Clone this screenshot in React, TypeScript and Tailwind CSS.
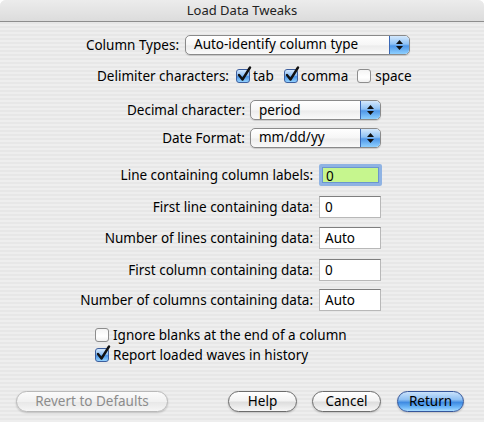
import React from "react"

const font = { fontFamily: '"Lucida Grande", "Noto Sans", sans-serif' }

function Stepper() {
  return (
    <div className="flex h-full w-[20px] flex-col items-center justify-center gap-[2px] rounded-r-[4px] border-l border-[#3a68b5] bg-[linear-gradient(180deg,#d4e8fc_0%,#8fc2f5_45%,#4f97e8_55%,#8ed0ff_100%)]">
      <svg width="7" height="4" viewBox="0 0 7 4">
        <path d="M3.5 0 L7 4 L0 4 Z" fill="#111" />
      </svg>
      <svg width="7" height="4" viewBox="0 0 7 4">
        <path d="M0 0 L7 0 L3.5 4 Z" fill="#111" />
      </svg>
    </div>
  )
}

function Popup({ value, width }: { value: string; width: string }) {
  return (
    <div
      className={`flex h-[20px] ${width} items-center overflow-hidden rounded-[5px] border border-[#8a8a8a] bg-[linear-gradient(180deg,#ffffff_0%,#f6f6f6_50%,#ececec_55%,#fafafa_100%)] shadow-[0_1px_1px_rgba(0,0,0,0.15)]`}
    >
      <span className="flex-1 pl-[8px] text-[13.5px] leading-none text-black">{value}</span>
      <Stepper />
    </div>
  )
}

function Checkbox({ checked }: { checked: boolean }) {
  return (
    <div className="relative h-[14px] w-[14px] shrink-0">
      <div
        className={`h-full w-full rounded-[3px] border ${
          checked
            ? "border-[#3d5f9e] bg-[linear-gradient(180deg,#d2e6fb_0%,#8ebff3_45%,#4a93e6_55%,#93d2ff_100%)]"
            : "border-[#8d8d8d] bg-[linear-gradient(180deg,#f4f4f4_0%,#ffffff_60%,#f0f0f0_100%)]"
        }`}
      />
      {checked && (
        <svg className="absolute left-[1px] top-[-3px]" width="15" height="16" viewBox="0 0 15 16">
          <path
            d="M2 9 L5.5 13.5 L13 1.5"
            fill="none"
            stroke="#111"
            strokeWidth="2.4"
            strokeLinecap="round"
            strokeLinejoin="round"
          />
        </svg>
      )}
    </div>
  )
}

function Field({ value, focused }: { value: string; focused?: boolean }) {
  if (focused) {
    return (
      <div className="flex h-[22px] w-[63px] rounded-[2px] border-[3px] border-[#8fb3e3] bg-[#c6f68e] shadow-[inset_0_0_0_1px_#6b95cf]">
        <span className="pl-[4px] pt-[1px] text-[13.5px] leading-[16px] text-black">{value}</span>
      </div>
    )
  }
  return (
    <div className="flex h-[22px] w-[62px] border border-[#b8b8b8] border-t-[#7f7f7f] bg-white">
      <span className="pl-[5px] pt-[2px] text-[13.5px] leading-[16px] text-black">{value}</span>
    </div>
  )
}

function FieldRow({ label, value, focused, mt }: { label: string; value: string; focused?: boolean; mt: string }) {
  return (
    <div className={`flex items-center ${mt}`}>
      <div className="w-[313px] text-right text-[13.5px] text-black">{label}</div>
      <div className="ml-[6px]">
        <Field value={value} focused={focused} />
      </div>
    </div>
  )
}

function Button({ label, width, kind }: { label: string; width: string; kind?: "default" | "disabled" }) {
  const styles =
    kind === "default"
      ? "border-[#34559a] bg-[linear-gradient(180deg,#c9e2fb_0%,#8fc0f3_40%,#3f8be2_55%,#6cb6f8_80%,#a9dcff_100%)] text-black"
      : kind === "disabled"
        ? "border-[#b9b9b9] bg-[linear-gradient(180deg,#fbfbfb_0%,#f1f1f1_50%,#e8e8e8_55%,#f6f6f6_100%)] text-[#8c8c8c]"
        : "border-[#6c6c6c] bg-[linear-gradient(180deg,#ffffff_0%,#f3f3f3_45%,#dedede_55%,#f7f7f7_100%)] text-black"
  return (
    <div
      className={`flex h-[21px] ${width} items-center justify-center rounded-full border text-[13.5px] leading-none shadow-[0_1px_2px_rgba(0,0,0,0.2)] ${styles}`}
    >
      {label}
    </div>
  )
}

export default function App() {
  return (
    <div className="h-[422px] w-[484px] bg-white" style={font}>
      <div className="flex h-[422px] w-[484px] flex-col overflow-hidden rounded-t-[6px] bg-[repeating-linear-gradient(180deg,#eeeeee_0px,#eeeeee_2px,#e7e7e7_2px,#e7e7e7_4px)]">
        <div className="flex h-[22px] shrink-0 items-center justify-center border-b border-[#8e8e8e] bg-[linear-gradient(180deg,#ececec_0%,#dcdcdc_100%)] text-[13px] text-[#222]">
          Load Data Tweaks
        </div>

        <div className="mt-[13px] flex items-center">
          <div className="w-[179px] text-right text-[13.5px] text-black">Column Types:</div>
          <div className="ml-[6px]">
            <Popup value="Auto-identify column type" width="w-[225px]" />
          </div>
        </div>

        <div className="mt-[11px] flex h-[20px] items-center text-[13.5px] text-black">
          <div className="w-[229px] text-right">Delimiter characters:</div>
          <div className="ml-[7px]">
            <Checkbox checked />
          </div>
          <span className="ml-[3px]">tab</span>
          <div className="ml-[10px]">
            <Checkbox checked />
          </div>
          <span className="ml-[3px]">comma</span>
          <div className="ml-[9px]">
            <Checkbox checked={false} />
          </div>
          <span className="ml-[4px]">space</span>
        </div>

        <div className="mt-[14px] flex items-center">
          <div className="w-[245px] text-right text-[13.5px] text-black">Decimal character:</div>
          <div className="ml-[5px]">
            <Popup value="period" width="w-[131px]" />
          </div>
        </div>

        <div className="mt-[7px] flex items-center">
          <div className="w-[245px] text-right text-[13.5px] text-black">Date Format:</div>
          <div className="ml-[5px]">
            <Popup value="mm/dd/yy" width="w-[131px]" />
          </div>
        </div>

        <FieldRow label="Line containing column labels:" value="0" focused mt="mt-[16px]" />
        <FieldRow label="First line containing data:" value="0" mt="mt-[10px]" />
        <FieldRow label="Number of lines containing data:" value="Auto" mt="mt-[9px]" />
        <FieldRow label="First column containing data:" value="0" mt="mt-[10px]" />
        <FieldRow label="Number of columns containing data:" value="Auto" mt="mt-[8px]" />

        <div className="mt-[16px] flex h-[16px] items-center pl-[95px] text-[13.5px] text-black">
          <Checkbox checked={false} />
          <span className="ml-[4px]">Ignore blanks at the end of a column</span>
        </div>
        <div className="mt-[4px] flex h-[16px] items-center pl-[95px] text-[13.5px] text-black">
          <Checkbox checked />
          <span className="ml-[4px]">Report loaded waves in history</span>
        </div>

        <div className="mt-[28px] flex items-center pl-[16px]">
          <Button label="Revert to Defaults" width="w-[152px]" kind="disabled" />
          <div className="ml-[60px]">
            <Button label="Help" width="w-[69px]" />
          </div>
          <div className="ml-[15px]">
            <Button label="Cancel" width="w-[69px]" />
          </div>
          <div className="ml-[16px]">
            <Button label="Return" width="w-[67px]" kind="default" />
          </div>
        </div>
      </div>
    </div>
  )
}
